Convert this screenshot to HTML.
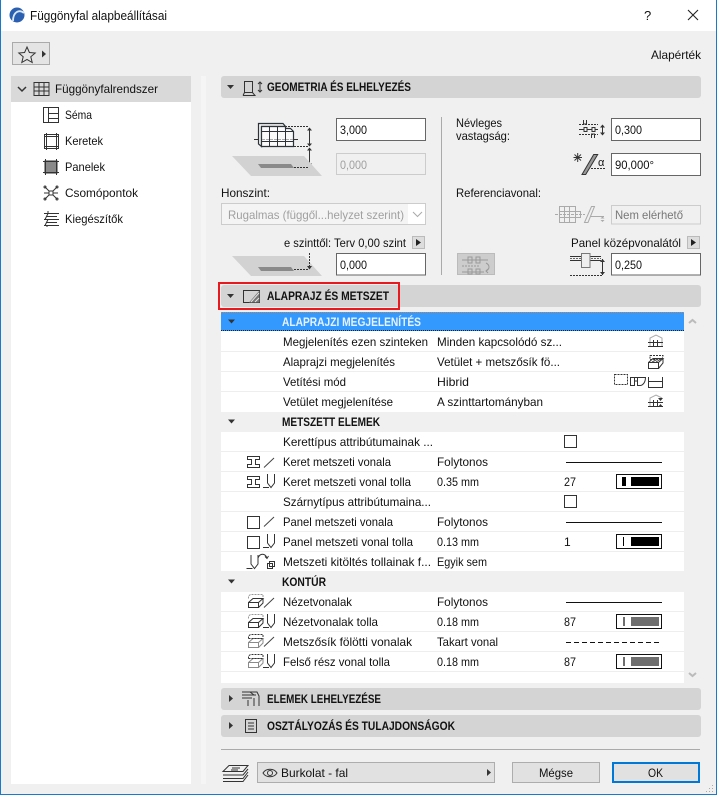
<!DOCTYPE html>
<html><head><meta charset="utf-8">
<style>
html,body{margin:0;padding:0;background:#f0f0f0}
svg{display:block}
text{font-family:"Liberation Sans",sans-serif;font-size:12px;fill:#111}
.b{font-weight:bold}
.d{fill:#a0a0a0}
.i{fill:none;stroke:#333;stroke-width:1}
.g{fill:none;stroke:#aaa;stroke-width:1}
.s{fill:none;stroke:#eee;stroke-width:1}
</style></head><body>
<svg width="717" height="795" viewBox="0 0 717 795" xmlns="http://www.w3.org/2000/svg">
<rect width="717" height="795" fill="#f0f0f0"/>
<rect width="717" height="31" fill="#fff"/>
<path d="M.5 0V794.5H716.5V0" fill="none" stroke="#1979ca"/>
<!-- title -->
<circle cx="17" cy="15" r="7.500" fill="#2b5fb0"/><path d="M13 21C13 12 19 9 24 13" fill="none" stroke="#dbe8f8" stroke-width="1.800"/>
<text x="30" y="20" textLength="137" lengthAdjust="spacingAndGlyphs" style="font-size:12.5px">Függönyfal alapbeállításai</text>
<text x="644" y="20" style="font-size:13px">?</text>
<path d="M688 10L698 20M698 10L688 20" stroke="#222" fill="none" stroke-width="1.100"/>
<!-- star button -->
<rect x="12.500" y="42.500" width="37" height="22" fill="#e4e4e4" stroke="#aaa"/>
<path d="M27 47l2.400 5.500 5.800.5-4.400 3.800 1.400 5.700-5.200-3-5.200 3 1.400-5.700-4.400-3.800 5.800-.5z" class="i"/>
<path d="M42 50.500l4 3.500-4 3.500z" fill="#333"/>
<text x="651" y="59" textLength="50" lengthAdjust="spacingAndGlyphs">Alapérték</text>
<!-- sidebar -->
<rect x="11" y="76" width="180" height="708" fill="#fff"/>
<rect x="11" y="76" width="180" height="26" fill="#d9d9d9"/>
<rect x="201" y="76" width="5" height="708" fill="#f5f5f5"/>
<path d="M18 87l4 4 4-4" fill="none" stroke="#333" stroke-width="1.500"/>
<path d="M34 82.500H49V95.500H34zM34 87H49M34 91H49M39 82V96M44 82V96" class="i"/>
<text x="55" y="93" textLength="103" lengthAdjust="spacingAndGlyphs">Függönyfalrendszer</text>
<path d="M43.500 107.500H58.500V122.500H43.500zM48.500 107.500V122.500M48.500 113.500H58.500M48.500 118.500H58.500" class="i"/>
<text x="65" y="119" textLength="27" lengthAdjust="spacingAndGlyphs">Séma</text>
<path d="M44 136.500H59M44 146.500H59M46.500 133V150M56.500 133V150M44.500 134.500H58.500V148.500H44.500z" class="i"/>
<text x="65" y="145" textLength="38" lengthAdjust="spacingAndGlyphs">Keretek</text>
<rect x="45" y="161" width="12" height="12" fill="#8a8a8a" stroke="#333"/><path d="M43 161.500H59M43 172.500H59M45.500 159V175M56.500 159V175" class="i"/>
<text x="65" y="171" textLength="40" lengthAdjust="spacingAndGlyphs">Panelek</text>
<path d="M45 187L49 191M57 187L53 191M45 199L49 195M57 199L53 195M44 193H48.500M53.500 193H58" class="i"/><rect x="49" y="191" width="4" height="4" class="i"/><circle cx="45" cy="187" r="1" class="i"/><circle cx="57" cy="187" r="1" class="i"/><circle cx="45" cy="199" r="1" class="i"/><circle cx="57" cy="199" r="1" class="i"/>
<text x="65" y="197" textLength="73" lengthAdjust="spacingAndGlyphs">Csomópontok</text>
<path d="M44 213.500H59M44 219.500H59M44 225.500H59M48 213.500L45 219.500M48 219.500L45 225.500M48 213.500V211M47 227V225" class="i"/><path d="M46 216.500H57M46 222.500H57" class="i"/>
<text x="65" y="223" textLength="58" lengthAdjust="spacingAndGlyphs">Kiegészítők</text>

<!-- section 1 header -->
<rect x="221" y="76" width="480" height="22" rx="3" fill="#d4d4d4"/>
<path d="M227 85h7l-3.500 4z" fill="#333"/>
<path d="M244.500 81.500H252.500V92.500H244.500zM243 95.500H255L252.500 92.500M244.500 92.500L243 95.500M260 82V92M258 84l2-2 2 2M258 90l2 2 2-2" class="i"/>
<text x="267" y="91" class="b" textLength="144" lengthAdjust="spacingAndGlyphs">GEOMETRIA ÉS ELHELYEZÉS</text>

<!-- geometry illustration -->
<path d="M254 139.500H298" stroke="#333" fill="none"/>
<path d="M258.500 123.500H283L285.500 126.500H261.500V146.500L258.500 144z" fill="#f4f4f4" stroke="#2b3338" stroke-width="1.200"/>
<path d="M261.500 126.500H285.500V128.500H290.500L293.500 131.500V146.500H261.500z" fill="#fafafa" stroke="#2b3338" stroke-width="1.200"/>
<path d="M261.500 131.500H293.500M261.500 141.500H293.500M269.500 126.500V146.500M277.500 126.500V146.500M285.500 126.500V146.500" stroke="#2b3338" fill="none"/>
<path d="M262 139.500H293" stroke="#aaa" stroke-dasharray="3 1" fill="none"/>
<path d="M285 126.500H309M294 146.500H309" stroke="#333" stroke-dasharray="2 1" fill="none"/>
<path d="M309.500 128V146M309.500 148V166" stroke="#333" fill="none"/><path d="M307 130.500l2.500-3 2.500 3zM307 143.500l2.500 3 2.500-3zM307 150.500l2.500-3 2.500 3zM307 163.500l2.500 3 2.500-3z" fill="#333"/>
<path d="M232 156H304L322 176H251z" fill="#d2d2d2"/>
<path d="M258 164H291L294 168H261z" fill="#8a8a8a"/>
<path d="M294 167.500H309" stroke="#333" stroke-dasharray="2 1" fill="none"/>
<rect x="336.500" y="118.500" width="89" height="22" fill="#fff" stroke="#666"/>
<text x="340" y="134" textLength="27" lengthAdjust="spacingAndGlyphs">3,000</text>
<rect x="336.500" y="153.500" width="89" height="21" fill="#f0f0f0" stroke="#ccc"/>
<text x="340" y="169" class="d" textLength="27" lengthAdjust="spacingAndGlyphs">0,000</text>
<text x="221" y="197" textLength="49" lengthAdjust="spacingAndGlyphs">Honszint:</text>
<rect x="221.500" y="203.500" width="204" height="21" fill="#f4f4f4" stroke="#ccc"/>
<rect x="408" y="204" width="17" height="20" fill="#fff"/>
<text x="228" y="219" class="d" textLength="176" lengthAdjust="spacingAndGlyphs">Rugalmas (függől...helyzet szerint)</text>
<path d="M413 212l4.500 4.500 4.500-4.500" fill="none" stroke="#aaa"/>
<text x="284" y="247" textLength="122" lengthAdjust="spacingAndGlyphs">e szinttől: Terv 0,00 szint</text>
<rect x="412.500" y="236.500" width="12" height="12" fill="#ddd" stroke="#bbb"/><path d="M416 239l5 3.500-5 3.500z" fill="#222"/>
<path d="M232 256H304L322 276H251z" fill="#d2d2d2"/>
<path d="M258 267H291L294 271H261z" fill="#8a8a8a"/>
<path d="M294 269.500H309" stroke="#333" stroke-dasharray="2 1" fill="none"/>
<path d="M309.500 253V268" stroke="#333" fill="none" stroke-dasharray="2 1"/><path d="M307 266l2.500 3.500 2.500-3.500z" fill="#333"/>
<rect x="336.500" y="253.500" width="89" height="21.500" fill="#fff" stroke="#666"/>
<text x="340" y="269" textLength="27" lengthAdjust="spacingAndGlyphs">0,000</text>
<path d="M441.500 117V275" stroke="#aaa"/>
<text x="456" y="127" textLength="46" lengthAdjust="spacingAndGlyphs">Névleges</text>
<text x="456" y="140" textLength="54" lengthAdjust="spacingAndGlyphs">vastagság:</text>
<path d="M579 124.500H598M579 134.500H598" stroke="#333" stroke-dasharray="2 1" fill="none"/>
<path d="M579 129.500H598" stroke="#333" fill="none"/>
<path d="M584 127.500h3v4h-3zM592 127.500h3v4h-3z" fill="#f0f0f0" stroke="#333"/>
<path d="M583.500 120v4h3v-4M591.500 138v-4h3v4" class="i"/>
<path d="M602.500 125V135" stroke="#333" fill="none"/><path d="M600 127.500l2.500-3 2.500 3zM600 132.500l2.500 3 2.500-3z" fill="#333"/>
<rect x="611.500" y="118.500" width="89" height="22" fill="#fff" stroke="#666"/>
<text x="615" y="134" textLength="27" lengthAdjust="spacingAndGlyphs">0,300</text>
<path d="M573.500 157.500H582M577.700 153V162M574.500 154.500L581 160.500M581 154.500L574.500 160.500" class="i"/>
<path d="M582 174.500L593.700 154.500H597.700L585.700 174.500z" fill="#999" stroke="#333"/>
<path d="M591 168.500H605" stroke="#333" stroke-dasharray="2 1" fill="none"/>
<text x="598" y="166" style="font-size:11px">α</text>
<rect x="611.500" y="153.500" width="89" height="22" fill="#fff" stroke="#666"/>
<text x="615" y="169" textLength="39" lengthAdjust="spacingAndGlyphs">90,000°</text>
<text x="456" y="197" textLength="85" lengthAdjust="spacingAndGlyphs">Referenciavonal:</text>
<path d="M559.500 206.500H575.500V222.500H559.500zM575.500 211.500H580.500V217.500H575.500M559.500 211.500H575.500M559.500 217.500H575.500M564.500 206.500V222.500M569.500 206.500V222.500" class="g"/>
<path d="M555 214.500H585" stroke="#aaa" stroke-dasharray="3 1"/>
<path d="M584.500 222.500L591.500 206.500H594.500L588 222.500zM590 216.500H604" class="g"/><path d="M600.500 218.500h4l-2-2zM600.500 220h4l-2 2z" fill="#aaa"/>
<rect x="611.500" y="205.500" width="89" height="18.500" fill="#f0f0f0" stroke="#ccc"/>
<text x="615" y="219" style="fill:#777" textLength="68" lengthAdjust="spacingAndGlyphs">Nem elérhető</text>
<text x="571" y="247" textLength="110" lengthAdjust="spacingAndGlyphs">Panel középvonalától</text>
<rect x="687.500" y="236.500" width="12" height="12" fill="#ddd" stroke="#bbb"/><path d="M691 239l5 3.500-5 3.500z" fill="#222"/>
<rect x="457.500" y="253.500" width="37" height="21" fill="#cdcdcd" stroke="#bbb"/>
<path d="M462 260H488M462 272H484M468 257h4v6h-4zM476 257h4v6h-4zM468 269h4v5h-4zM476 269h4v5h-4z" stroke="#999" fill="none"/><path d="M462 266H480" stroke="#999" stroke-dasharray="2 1"/><path d="M486 263c4 2 4 6 0 8M488 269l-2 2 2 2" stroke="#999" fill="none"/>
<path d="M570 256.500H582M570 260.500H582M590 256.500H601M590 260.500H601" stroke="#333" fill="none"/>
<path d="M570 258.500H601" stroke="#666" fill="none" stroke-dasharray="2 1"/>
<rect x="581.500" y="253.500" width="8.500" height="14" fill="#eee" stroke="#777"/>
<path d="M570 275.500H602" stroke="#333" stroke-dasharray="2 1"/>
<path d="M602.500 259V275" stroke="#333" fill="none"/><path d="M600 262l2.500-3 2.500 3zM600 272l2.500 3 2.500-3z" fill="#333"/>
<rect x="611.500" y="253.500" width="89" height="21.500" fill="#fff" stroke="#666"/>
<text x="615" y="269" textLength="27" lengthAdjust="spacingAndGlyphs">0,250</text>

<!-- section 2 -->
<rect x="221" y="285" width="480" height="22" rx="3" fill="#d4d4d4"/>
<rect x="219" y="283" width="180" height="26" fill="none" stroke="#e8191f" stroke-width="2"/>
<path d="M227 294h7l-3.500 4z" fill="#333"/>
<path d="M243.500 290.500H259.500V302.500H243.500z" class="i"/>
<path d="M249 302.500L259.500 290.500V302.500z" fill="#777"/>
<path d="M251 302L259 293M255 302L259 298" stroke="#e6e6e6" fill="none"/>
<text x="267" y="300" class="b" textLength="122" lengthAdjust="spacingAndGlyphs">ALAPRAJZ ÉS METSZET</text>

<!-- list -->
<rect x="221" y="312" width="463" height="371" fill="#fff"/>
<rect x="221" y="312" width="463" height="19" fill="#3399ff"/>
<path d="M221 312.500H684" stroke="#c9854a" stroke-dasharray="1 1"/><path d="M221 330.500H684" stroke="#123" stroke-dasharray="1 1"/>
<path d="M228 319.500h7l-3.500 4z" fill="#333"/>
<text x="282" y="326" class="b" style="fill:#e8f2ff" textLength="139" lengthAdjust="spacingAndGlyphs">ALAPRAJZI MEGJELENÍTÉS</text>
<rect x="221" y="412" width="463" height="20" fill="#f0f0f0"/>
<rect x="221" y="571" width="463" height="21" fill="#f0f0f0"/>
<path d="M221 351.500H684M221 371.500H684M221 391.500H684M221 451.500H684M221 471.500H684M221 491.500H684M221 511.500H684M221 531.500H684M221 551.500H684M221 611.500H684M221 631.500H684M221 651.500H684M221 671.500H684" class="s"/>
<path d="M228 419.500h7l-3.500 4z" fill="#333"/>
<path d="M228 579.500h7l-3.500 4z" fill="#333"/>
<text x="283" y="346" textLength="145" lengthAdjust="spacingAndGlyphs">Megjelenítés ezen szinteken</text><text x="437" y="346" textLength="125" lengthAdjust="spacingAndGlyphs">Minden kapcsolódó sz...</text>
<text x="283" y="366" textLength="112" lengthAdjust="spacingAndGlyphs">Alaprajzi megjelenítés</text><text x="437" y="366" textLength="123" lengthAdjust="spacingAndGlyphs">Vetület + metszősík fö...</text>
<text x="283" y="386" textLength="63" lengthAdjust="spacingAndGlyphs">Vetítési mód</text><text x="437" y="386" textLength="32" lengthAdjust="spacingAndGlyphs">Hibrid</text>
<text x="283" y="406" textLength="110" lengthAdjust="spacingAndGlyphs">Vetület megjelenítése</text><text x="437" y="406" textLength="106" lengthAdjust="spacingAndGlyphs">A szinttartományban</text>
<text x="282" y="426" class="b" textLength="98" lengthAdjust="spacingAndGlyphs">METSZETT ELEMEK</text>
<text x="283" y="446" textLength="150" lengthAdjust="spacingAndGlyphs">Kerettípus attribútumainak ...</text>
<text x="283" y="466" textLength="108" lengthAdjust="spacingAndGlyphs">Keret metszeti vonala</text><text x="437" y="466" textLength="51" lengthAdjust="spacingAndGlyphs">Folytonos</text>
<text x="283" y="486" textLength="128" lengthAdjust="spacingAndGlyphs">Keret metszeti vonal tolla</text><text x="437" y="486" textLength="42" lengthAdjust="spacingAndGlyphs">0.35 mm</text><text x="564" y="486" textLength="12" lengthAdjust="spacingAndGlyphs">27</text>
<text x="283" y="506" textLength="148" lengthAdjust="spacingAndGlyphs">Szárnytípus attribútumaina...</text>
<text x="283" y="526" textLength="110" lengthAdjust="spacingAndGlyphs">Panel metszeti vonala</text><text x="437" y="526" textLength="51" lengthAdjust="spacingAndGlyphs">Folytonos</text>
<text x="283" y="546" textLength="130" lengthAdjust="spacingAndGlyphs">Panel metszeti vonal tolla</text><text x="437" y="546" textLength="42" lengthAdjust="spacingAndGlyphs">0.13 mm</text><text x="564" y="546">1</text>
<text x="283" y="566" textLength="148" lengthAdjust="spacingAndGlyphs">Metszeti kitöltés tollainak f...</text><text x="437" y="566" textLength="50" lengthAdjust="spacingAndGlyphs">Egyik sem</text>
<text x="282" y="586" class="b" textLength="44" lengthAdjust="spacingAndGlyphs">KONTÚR</text>
<text x="283" y="606" textLength="69" lengthAdjust="spacingAndGlyphs">Nézetvonalak</text><text x="437" y="606" textLength="51" lengthAdjust="spacingAndGlyphs">Folytonos</text>
<text x="283" y="626" textLength="95" lengthAdjust="spacingAndGlyphs">Nézetvonalak tolla</text><text x="437" y="626" textLength="42" lengthAdjust="spacingAndGlyphs">0.18 mm</text><text x="564" y="626" textLength="12" lengthAdjust="spacingAndGlyphs">87</text>
<text x="283" y="646" textLength="129" lengthAdjust="spacingAndGlyphs">Metszősík fölötti vonalak</text><text x="437" y="646" textLength="61" lengthAdjust="spacingAndGlyphs">Takart vonal</text>
<text x="283" y="666" textLength="107" lengthAdjust="spacingAndGlyphs">Felső rész vonal tolla</text><text x="437" y="666" textLength="42" lengthAdjust="spacingAndGlyphs">0.18 mm</text><text x="564" y="666" textLength="12" lengthAdjust="spacingAndGlyphs">87</text>

<!-- right icons rows -->
<path d="M650 347V338L656 335L662 338V347" class="g"/><path d="M648 342.500H663M648 346.500H663M653.500 340V346.500M657.500 340V346.500" class="i"/>
<path d="M650 355.500H663L662 359.500H650z" fill="none" stroke="#333" stroke-dasharray="2 1"/>
<path d="M648.500 362.500H658.500V368.500H648.500zM648.500 362.500L653 358.500H663L658.500 362.500M663 358.500V363L658.500 368.500" class="i"/><path d="M652 362L658 359M656 362L661 359" stroke="#555"/>
<rect x="614.500" y="374.500" width="13" height="10" fill="none" stroke="#333" stroke-dasharray="2 1"/>
<path d="M630 377.500H646M630.500 377.500V385.500H634.500V377.500M637.500 377.500V385.500H640C643 385.500 645.500 382 645.500 377.500M634.500 381H637.500" class="i"/><path d="M648.500 377V387.500H662.500V377M648.500 381.500H662.500" class="i"/>
<path d="M650 406V398L656 395L662 398" class="g"/><path d="M648 402.500H663M648 406.500H663M653.500 400V406.500M657.500 400V406.500" class="i"/><path d="M658 398h5l-2.500 3zM658 407h5l-2.500-3z" fill="#333"/>
<rect x="564.500" y="435.500" width="12" height="12" fill="#fff" stroke="#333"/>
<rect x="564.500" y="495.500" width="12" height="12" fill="#fff" stroke="#333"/>
<path d="M566 462.500H662M566 522.500H662M566 602.500H662" stroke="#111"/>
<path d="M566 642.500H662" stroke="#111" stroke-dasharray="5 3"/>
<rect x="616.500" y="474.500" width="45" height="14" fill="#fff" stroke="#111"/><rect x="622" y="477" width="4" height="9"/><rect x="631" y="477" width="28" height="9"/>
<rect x="616.500" y="534.500" width="45" height="14" fill="#fff" stroke="#111"/><rect x="623" y="537" width="1" height="9"/><rect x="631" y="537" width="28" height="9"/>
<rect x="616.500" y="614.500" width="45" height="14" fill="#fff" stroke="#111"/><rect x="623" y="617" width="2" height="9" fill="#6e6e6e"/><rect x="631" y="617" width="28" height="9" fill="#6e6e6e"/>
<rect x="616.500" y="654.500" width="45" height="14" fill="#fff" stroke="#111"/><rect x="623" y="657" width="2" height="9" fill="#6e6e6e"/><rect x="631" y="657" width="28" height="9" fill="#6e6e6e"/>

<!-- left icons rows -->
<defs>
<path id="ib" d="M247.500 456.500H259.500V459.500H255.500V464.500H259.500V467.500H247.500V464.500H251.500V459.500H247.500z" class="i"/>
<path id="sl" d="M264 467.500L274 458" stroke="#444" fill="none"/>
<path id="pn" d="M267.500 474V483L271 487.500L274.500 483V474M263 487.500H269" stroke="#333" fill="none"/>
<path id="bx" d="M248.500 602.500H258.500V607.500H248.500zM248.500 602.500L253 598.500H263L258.500 602.500M263 598.500V603L258.500 607.500" stroke-width="1" fill="none"/>
<path id="bt" d="M248.500 598.500V596L250.500 594.500H263V598" fill="none" stroke-dasharray="2 1" stroke-width="1"/>
</defs>
<use href="#ib"/><use href="#sl"/>
<use href="#ib" y="20"/><use href="#pn"/>
<rect x="247.500" y="516.500" width="12" height="12" fill="none" stroke="#333"/><use href="#sl" y="59"/>
<rect x="247.500" y="536.500" width="12" height="12" fill="none" stroke="#333"/><use href="#pn" y="60"/>
<use href="#pn" x="-16.500" y="81"/><path d="M258 558C260 553 265 553 267 558M265 556.500l2 2 1.500-2.500" class="i"/><rect x="267.500" y="563.500" width="5" height="5" class="i"/><rect x="269.500" y="561.500" width="5" height="5" class="i"/>
<use href="#bx" stroke="#333"/><use href="#bt" stroke="#999"/><use href="#sl" y="140"/>
<use href="#bx" y="20" stroke="#333"/><use href="#bt" y="20" stroke="#999"/><use href="#pn" y="140"/>
<use href="#bx" y="40" stroke="#8a8a8a"/><use href="#bt" y="40" stroke="#333"/><path d="M248.500 638.500H258.500L263 638.500" stroke="#333" fill="none" stroke-dasharray="2 1"/><use href="#sl" y="179"/>
<use href="#bx" y="60" stroke="#8a8a8a"/><use href="#bt" y="60" stroke="#333"/><path d="M248.500 658.500H263" stroke="#333" fill="none" stroke-dasharray="2 1"/><use href="#pn" y="180"/>

<!-- scrollbar -->
<path d="M689 323l3.500-3 3.500 3" fill="none" stroke="#bbb" stroke-width="2"/>
<path d="M689 673l3.500 3 3.500-3" fill="none" stroke="#bbb" stroke-width="2"/>

<!-- bottom sections -->
<rect x="221" y="688" width="480" height="22" rx="3" fill="#d4d4d4"/>
<path d="M229 695l4 3.500-4 3.500z" fill="#333"/>
<path d="M242 692H250L257 692L259 696V706M242 695H256M242 698H252M248 700V706M254 698V706M250 692L254 695" class="i"/>
<text x="267" y="703" class="b" textLength="114" lengthAdjust="spacingAndGlyphs">ELEMEK LEHELYEZÉSE</text>
<rect x="221" y="715" width="480" height="22" rx="3" fill="#d4d4d4"/>
<path d="M229 722l4 3.500-4 3.500z" fill="#333"/>
<path d="M245.500 719.500H256.500V732.500H245.500zM248 723H254M248 726H254M248 729H254" class="i"/>
<text x="267" y="730" class="b" textLength="188" lengthAdjust="spacingAndGlyphs">OSZTÁLYOZÁS ÉS TULAJDONSÁGOK</text>
<path d="M221 749.500H700" stroke="#aaa"/>

<!-- footer -->
<path d="M223 771.500L229 765.500H248L243 771.500zM223 775H243L248 769M223 778.500H243L248 772M223 781.500H243L248 775" class="i"/><path d="M232 768H240M231 770H238" stroke="#333"/>
<rect x="257.500" y="762.500" width="237" height="20" fill="#e1e1e1" stroke="#adadad"/>
<path d="M263 773C266 768 274 768 277 773C274 778 266 778 263 773z" class="i"/><circle cx="270" cy="773" r="2.500" class="i"/>
<text x="281" y="777" textLength="67" lengthAdjust="spacingAndGlyphs">Burkolat - fal</text>
<path d="M487 769l4 3.500-4 3.500z" fill="#333"/>
<rect x="512.500" y="762.500" width="87" height="20" fill="#e1e1e1" stroke="#adadad"/>
<text x="539" y="777" textLength="34" lengthAdjust="spacingAndGlyphs">Mégse</text>
<rect x="613" y="763" width="86" height="19" fill="#e1e1e1" stroke="#0078d7" stroke-width="2"/>
<text x="648" y="777" textLength="15" lengthAdjust="spacingAndGlyphs">OK</text>
<path d="M712 791h1v1h-1zM709 791h1v1h-1zM706 791h1v1h-1zM712 788h1v1h-1zM709 788h1v1h-1zM712 785h1v1h-1z" fill="#aaa"/>
</svg>
</body></html>
